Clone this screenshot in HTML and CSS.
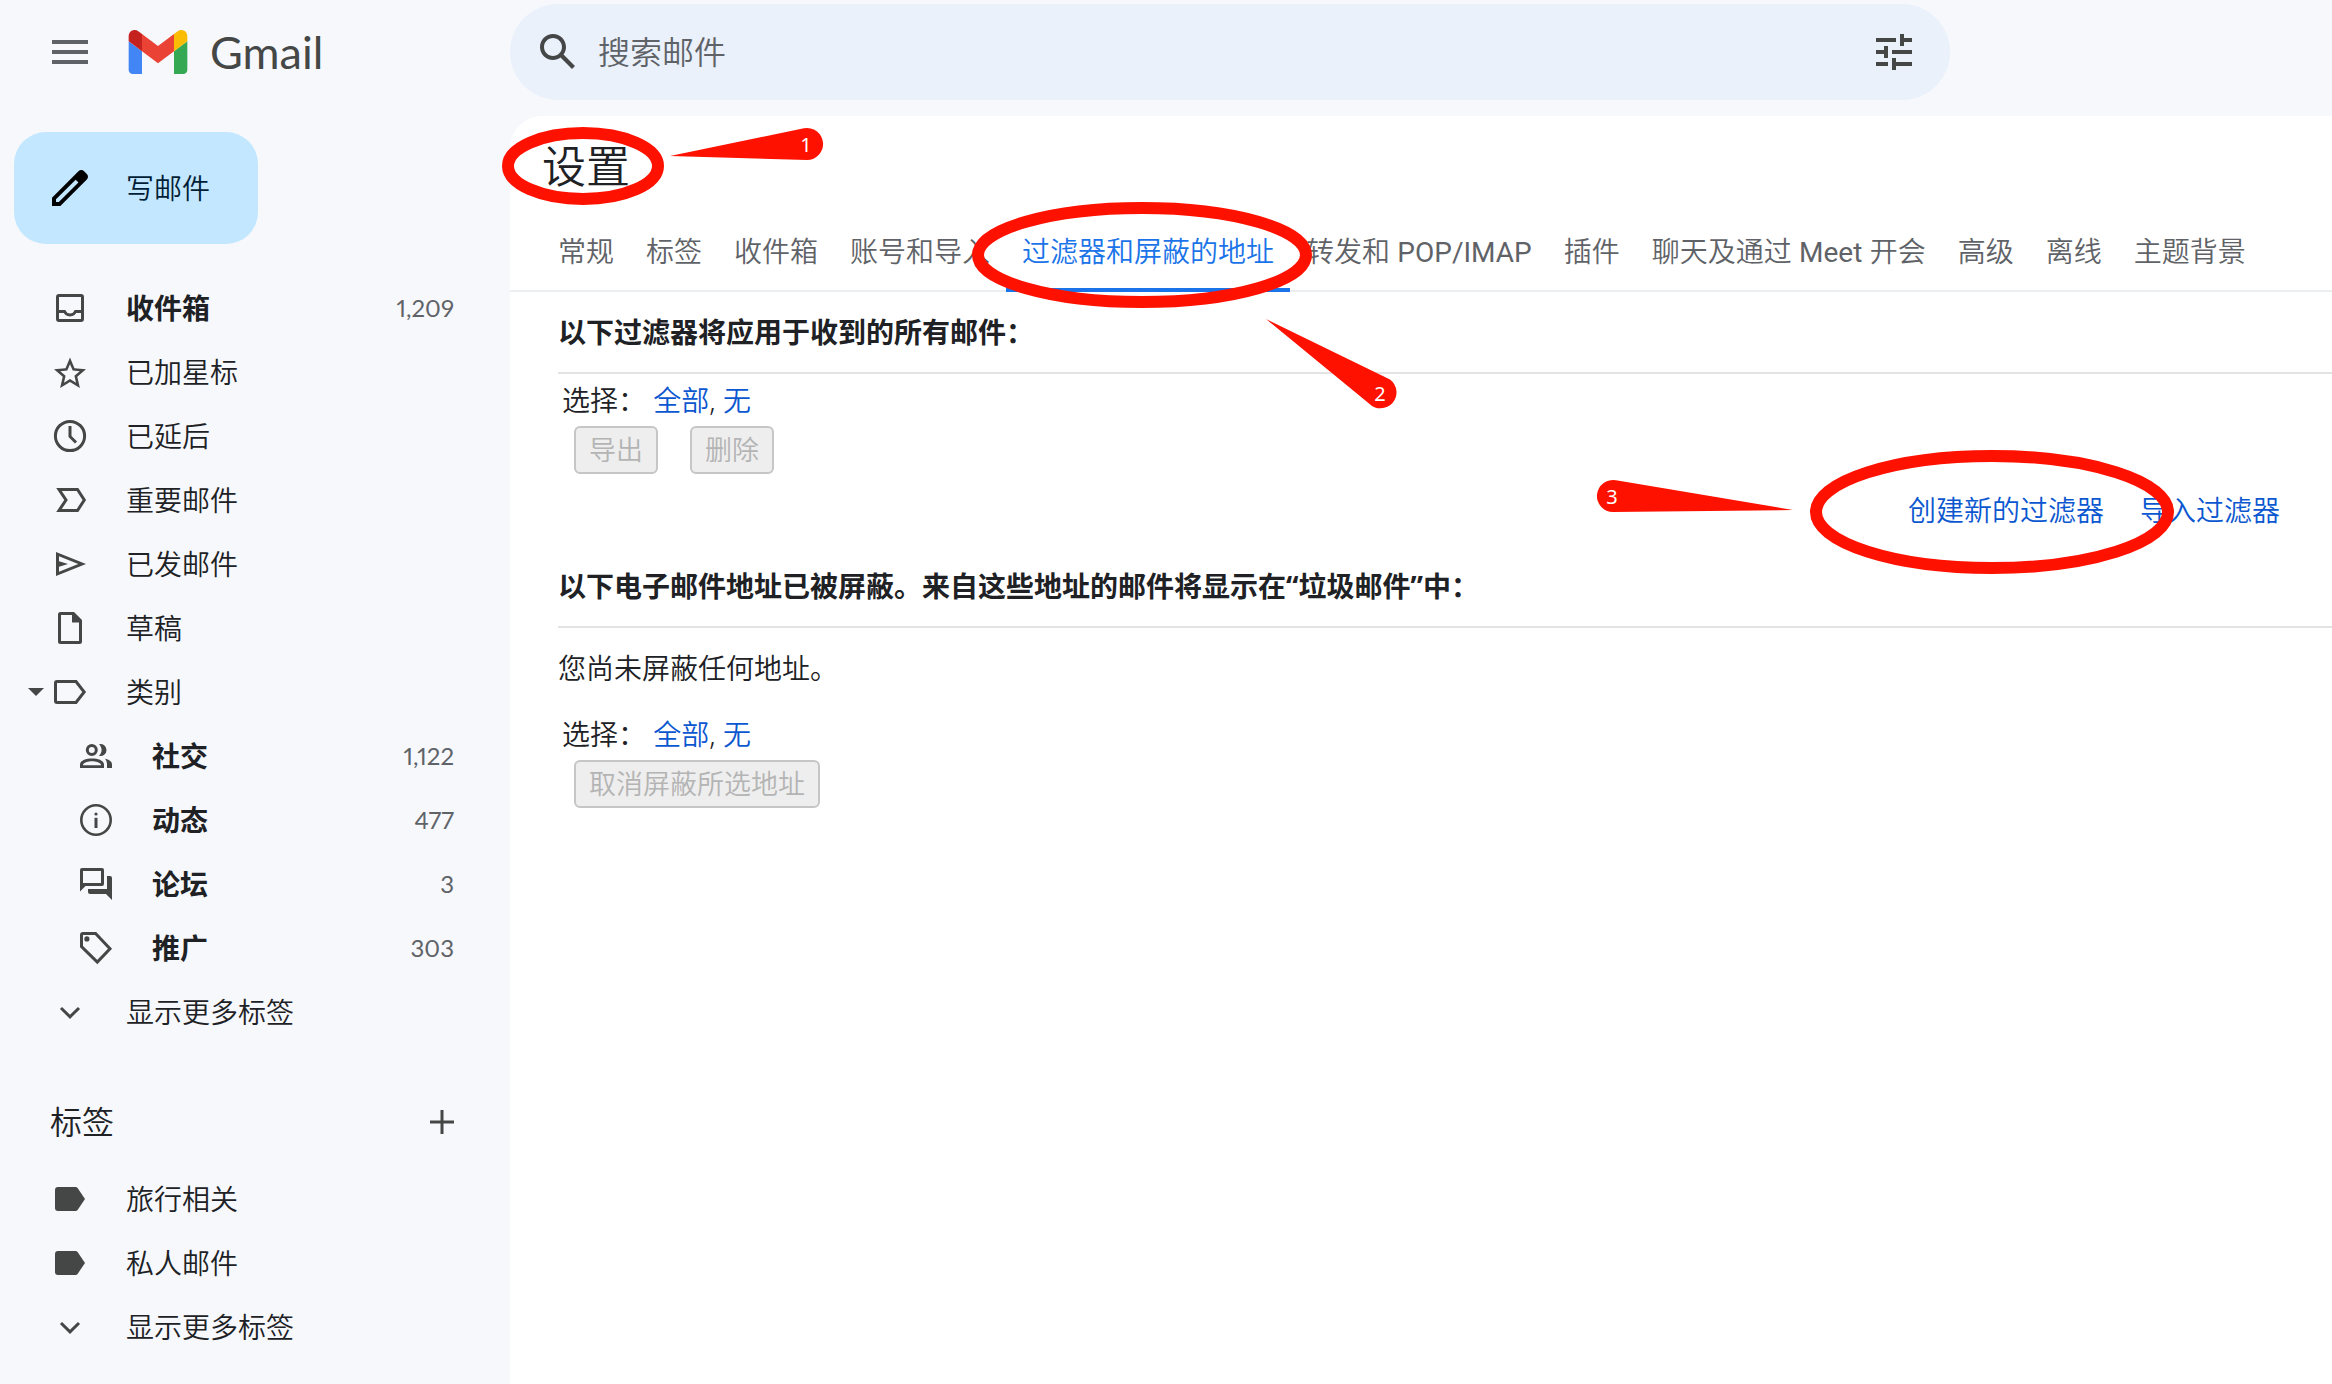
FILE: index.html
```html
<!DOCTYPE html>
<html lang="zh-CN">
<head>
<meta charset="utf-8">
<meta name="viewport" content="width=device-width, initial-scale=1">
<title>设置 - Gmail</title>
<link rel="stylesheet" href="styles.css">
</head>
<body>
<div class="app">
  <header class="topbar">
    <div class="brand">
      <button class="icon-button" type="button" aria-label="主菜单">
        <svg class="icon-lg" viewBox="0 0 24 24"><path d="M3 18h18v-2H3v2zm0-5h18v-2H3v2zm0-7v2h18V6H3z"/></svg>
      </button>
      <a class="brand-link" href="#">
        <svg class="logo" viewBox="52 42 88 66" aria-hidden="true">
          <path fill="#4285f4" d="M58 108h14V74L52 59v43c0 3.32 2.69 6 6 6"/>
          <path fill="#34a853" d="M120 108h14c3.32 0 6-2.69 6-6V59l-20 15"/>
          <path fill="#fbbc04" d="M120 48v26l20-15v-8c0-7.42-8.47-11.65-14.4-7.2"/>
          <path fill="#ea4335" d="M72 74V48l24 18 24-18v26L96 92"/>
          <path fill="#c5221f" d="M52 51v8l20 15V48l-5.6-4.2c-5.94-4.45-14.4-.22-14.4 7.2"/>
        </svg>
        <span class="brand-name">Gmail</span>
      </a>
    </div>
    <form class="search" role="search">
      <button class="icon-button" type="button" aria-label="搜索">
        <svg class="icon-lg" viewBox="0 0 24 24"><path d="M20.49 19l-5.73-5.73C15.53 12.2 16 10.91 16 9.5 16 5.91 13.09 3 9.5 3S3 5.91 3 9.5 5.91 16 9.5 16c1.41 0 2.7-.47 3.77-1.24L19 20.49 20.49 19zM5 9.5C5 7.01 7.01 5 9.5 5S14 7.01 14 9.5 11.99 14 9.5 14 5 11.99 5 9.5z"/></svg>
      </button>
      <input class="search-input" type="text" placeholder="搜索邮件" aria-label="搜索邮件">
      <button class="icon-button" type="button" aria-label="显示搜索选项">
        <svg class="icon-lg" viewBox="0 0 24 24"><path d="M3 17v2h6v-2H3zM3 5v2h10V5H3zm10 16v-2h8v-2h-8v-2h-2v6h2zM7 9v2H3v2h4v2h2V9H7zm14 4v-2H11v2h10zm-6-4h2V7h4V5h-4V3h-2v6z"/></svg>
      </button>
    </form>
  </header>

  <aside class="sidebar">
    <button class="compose" type="button">
      <svg class="icon-lg" viewBox="0 0 24 24"><path d="M20.41 4.94l-1.35-1.35c-.78-.78-2.05-.78-2.83 0L3 16.82V21h4.18L20.41 7.77c.79-.78.79-2.05 0-2.83zM6.41 19.06L5 19v-1.36l9.82-9.82 1.41 1.41z"/></svg>
      写邮件
    </button>
    <nav class="folders">
      <a class="row row-unread" href="#">
        <svg class="icon line" viewBox="0 0 40 40"><rect x="7.5" y="7.5" width="25" height="25" rx="1.5"/><path d="M7.5 23.5h7c1 2.2 3 3.4 5.5 3.4s4.5-1.2 5.500-3.4h7"/></svg>
        <span class="name">收件箱</span><span class="count">1,209</span>
      </a>
      <a class="row" href="#">
        <svg class="icon" viewBox="-0.5 -1.5 25 25"><path d="M22 9.24l-7.19-.62L12 2 9.19 8.63 2 9.24l5.46 4.73L5.82 21 12 17.27 18.18 21l-1.63-7.03L22 9.24zM12 15.4l-3.76 2.27 1-4.28-3.320-2.88 4.38-.38L12 6.1l1.710 4.04 4.38.38-3.32 2.88 1 4.28L12 15.4z"/></svg>
        <span class="name">已加星标</span>
      </a>
      <a class="row" href="#">
        <svg class="icon line" viewBox="0 0 40 40"><circle cx="20" cy="20" r="14.6"/><path d="M20 10v10.500l6 6"/></svg>
        <span class="name">已延后</span>
      </a>
      <a class="row" href="#">
        <svg class="icon line" viewBox="0 0 40 40"><path d="M9 9.500h18.500L34.300 20l-6.800 10.500H9L16 20z"/></svg>
        <span class="name">重要邮件</span>
      </a>
      <a class="row" href="#">
        <svg class="icon" viewBox="0 0 40 40"><path fill-rule="evenodd" d="M6 8l30 12L6 32zM9 12.300v5L18 20l-9 2.700v5L28.300 20z"/></svg>
        <span class="name">已发邮件</span>
      </a>
      <a class="row" href="#">
        <svg class="icon" viewBox="0 0 40 40"><path fill-rule="evenodd" d="M10.500 4H24l8 8v21.500a2.500 2.500 0 0 1-2.500 2.500h-19A2.500 2.500 0 0 1 8 33.500v-27A2.500 2.500 0 0 1 10.500 4zM11 7v26h18V14.500h-7V7z"/></svg>
        <span class="name">草稿</span>
      </a>
      <a class="row row-open" href="#">
        <svg class="caret" viewBox="0 0 16 8"><path d="M0 0h16L8 8z"/></svg>
        <svg class="icon line" viewBox="0 0 40 40"><path d="M7 9.500h19L34.200 20 26 30.500H7A1.500 1.500 0 0 1 5.500 29V11A1.500 1.500 0 0 1 7 9.500z"/></svg>
        <span class="name">类别</span>
      </a>
      <a class="row row-nested row-unread" href="#">
        <svg class="icon" viewBox="0 0 40 40"><circle cx="15.800" cy="14" r="4.500" fill="none" stroke="currentColor" stroke-width="3"/><path fill-rule="evenodd" d="M4 32v-3.500c0-4 6-6 12-6s12 2 12 6V32zM7 29.300h18v-.5c0-1.600-4.500-3.500-9-3.500s-9 1.900-9 3.500z"/><path d="M23 8.200a6 6 0 1 1 0 11.600c1.700-1.600 2.600-3.600 2.600-5.800s-.9-4.200-2.600-5.800zM29 22.800c4 .9 7 2.700 7 5.700V32h-5v-3.500c0-2.400-.8-4.300-2-5.700z"/></svg>
        <span class="name">社交</span><span class="count">1,122</span>
      </a>
      <a class="row row-nested row-unread" href="#">
        <svg class="icon" viewBox="0 0 40 40"><circle cx="20" cy="20" r="14.700" fill="none" stroke="currentColor" stroke-width="2.600"/><circle cx="20" cy="14" r="1.600"/><path d="M18.500 17.800h3V28h-3z"/></svg>
        <span class="name">动态</span><span class="count">477</span>
      </a>
      <a class="row row-nested row-unread" href="#">
        <svg class="icon" viewBox="0 0 40 40"><path fill-rule="evenodd" d="M6 4h20a2 2 0 0 1 2 2v14a2 2 0 0 1-2 2H9.500L4 27.500V6a2 2 0 0 1 2-2zM7 7v12h18V7z"/><path d="M31 12h3a2 2 0 0 1 2 2v22l-6-6H14a2 2 0 0 1-2-2v-3h19z"/></svg>
        <span class="name">论坛</span><span class="count">3</span>
      </a>
      <a class="row row-nested row-unread" href="#">
        <svg class="icon" viewBox="0 0 40 40"><path fill="none" stroke="currentColor" stroke-width="3" d="M7 5.500h12.600L34 20.700 21.300 34 5.500 18.500V7A1.500 1.500 0 0 1 7 5.500z"/><circle cx="10.900" cy="10.900" r="2.600"/></svg>
        <span class="name">推广</span><span class="count">303</span>
      </a>
      <a class="row" href="#">
        <svg class="icon line" viewBox="0 0 40 40"><path d="M11 16l9 8.800 9-8.800"/></svg>
        <span class="name">显示更多标签</span>
      </a>
    </nav>
    <div class="labels-head">
      <h2 class="labels-title">标签</h2>
      <button class="icon-button" type="button" aria-label="新建标签">
        <svg class="plus line" viewBox="0 0 24 24"><path d="M12 0v24M0 12h24"/></svg>
      </button>
    </div>
    <nav class="labels">
      <a class="row" href="#">
        <svg class="icon" viewBox="0 0 40 40"><path d="M8 8h17.500a2.500 2.500 0 0 1 2.100 1.100L35 20l-7.400 10.900a2.500 2.500 0 0 1-2.100 1.100H8a3 3 0 0 1-3-3V11a3 3 0 0 1 3-3z"/></svg>
        <span class="name">旅行相关</span>
      </a>
      <a class="row" href="#">
        <svg class="icon" viewBox="0 0 40 40"><path d="M8 8h17.500a2.500 2.500 0 0 1 2.100 1.100L35 20l-7.400 10.900a2.500 2.500 0 0 1-2.100 1.100H8a3 3 0 0 1-3-3V11a3 3 0 0 1 3-3z"/></svg>
        <span class="name">私人邮件</span>
      </a>
      <a class="row" href="#">
        <svg class="icon line" viewBox="0 0 40 40"><path d="M11 16l9 8.800 9-8.800"/></svg>
        <span class="name">显示更多标签</span>
      </a>
    </nav>
  </aside>

  <main class="panel">
    <h1 class="title">设置
      <svg class="note note-title" width="330" height="90" viewBox="0 0 330 90" aria-hidden="true">
        <ellipse cx="81" cy="45" rx="75" ry="33"/>
        <path d="M168 35L302 7.300a16 16 0 1 1 3 31.700z"/>
        <text x="304" y="31">1</text>
      </svg>
    </h1>
    <nav class="tabs">
      <a class="tab" href="#">常规</a>
      <a class="tab" href="#">标签</a>
      <a class="tab" href="#">收件箱</a>
      <a class="tab" href="#">账号和导入</a>
      <a class="tab tab-active" href="#" aria-current="page">过滤器和屏蔽的地址
        <svg class="note note-tab" width="430" height="210" viewBox="0 0 430 210" aria-hidden="true">
          <ellipse cx="170" cy="53" rx="164" ry="47"/>
          <path d="M294 117L418 177.500a16 16 0 1 1-21 24z"/>
          <text x="408" y="199">2</text>
        </svg>
      </a>
      <a class="tab" href="#">转发和 <span class="latin">POP/IMAP</span></a>
      <a class="tab" href="#">插件</a>
      <a class="tab" href="#">聊天及通过 <span class="latin">Meet</span> 开会</a>
      <a class="tab" href="#">高级</a>
      <a class="tab" href="#">离线</a>
      <a class="tab" href="#">主题背景</a>
    </nav>
    <section class="section">
      <h2 class="section-title">以下过滤器将应用于收到的所有邮件：</h2>
      <p class="select">选择： <a href="#">全部</a>, <a href="#">无</a></p>
      <div class="actions">
        <button class="action" type="button" disabled>导出</button>
        <button class="action" type="button" disabled>删除</button>
      </div>
      <div class="filter-links">
        <a class="filter-create" href="#">创建新的过滤器
          <svg class="note note-link" width="580" height="128" viewBox="0 0 580 128" aria-hidden="true">
            <ellipse cx="396" cy="64" rx="176" ry="56"/>
            <path d="M197 62L17 64a16 16 0 1 1 3-31.700z"/>
            <text x="16" y="56">3</text>
          </svg>
        </a>
        <a href="#">导入过滤器</a>
      </div>
    </section>
    <section class="section section-blocked">
      <h2 class="section-title">以下电子邮件地址已被屏蔽。来自这些地址的邮件将显示在“垃圾邮件”中：</h2>
      <p class="empty">您尚未屏蔽任何地址。</p>
      <p class="select">选择： <a href="#">全部</a>, <a href="#">无</a></p>
      <div class="actions">
        <button class="action" type="button" disabled>取消屏蔽所选地址</button>
      </div>
    </section>
  </main>
</div>
</body>
</html>
```
FILE: styles.css
```css
* { box-sizing: border-box; }

body {
  margin: 0;
  background: #f6f8fc;
  color: #202124;
  font-family: "Noto Sans", "Noto Sans CJK SC", sans-serif;
  font-size: 28px;
  font-weight: 350;
  line-height: 40px;
}

a { color: #0b57d0; text-decoration: none; }
h1, h2, p { margin: 0; }
svg { display: block; flex: none; fill: currentColor; }
button, input { font: inherit; }

.app {
  display: grid;
  grid-template-columns: 510px minmax(0, 1fr);
  grid-template-rows: auto 1fr;
  min-height: 100vh;
  overflow: hidden;
}

.icon-button {
  padding: 0;
  border: 0;
  background: none;
  color: #444746;
}
.icon-lg { width: 48px; height: 48px; }
.line {
  fill: none;
  stroke: currentColor;
  stroke-width: 3;
}

/* Top bar */
.topbar {
  grid-column: 1 / -1;
  display: grid;
  grid-template-columns: subgrid;
  align-items: center;
  padding: 4px 0 16px;
}
.brand {
  display: flex;
  align-items: center;
  gap: 34px;
  padding-left: 46px;
}
.brand .icon-button { color: #5f6368; }
.brand-link {
  display: flex;
  align-items: center;
  gap: 22px;
}
.logo { width: 60px; height: 44px; }
.brand-name {
  color: #444746;
  font-family: Lato, sans-serif;
  font-size: 45px;
  font-weight: 400;
}
.search {
  display: flex;
  align-items: center;
  gap: 16px;
  width: 100%;
  max-width: 1440px;
  height: 96px;
  padding: 0 32px 0 24px;
  border-radius: 48px;
  background: #eaf1fb;
}
.search-input {
  flex: 1;
  min-width: 0;
  padding: 0;
  border: 0;
  outline: 0;
  background: none;
  color: #202124;
  font-size: 32px;
}
.search-input::placeholder { color: #5f6368; opacity: 1; }

/* Sidebar */
.sidebar { padding-top: 16px; }
.compose {
  display: flex;
  align-items: center;
  gap: 32px;
  height: 112px;
  margin: 0 0 32px 14px;
  padding: 0 48px 0 32px;
  border: 0;
  border-radius: 32px;
  background: #c2e7ff;
  color: #001d35;
}
.compose svg { color: #000; }
.row {
  display: flex;
  align-items: center;
  height: 64px;
  padding: 0 56px 0 50px;
  color: #202124;
}
.row-nested { padding-left: 76px; }
.row-open { padding-left: 28px; }
.row-unread .name { font-weight: 700; }
.icon {
  width: 40px;
  height: 40px;
  margin-right: 36px;
  color: #444746;
}
.caret {
  width: 16px;
  height: 8px;
  margin-right: 6px;
  color: #444746;
}
.name { flex: 1; }
.count {
  color: #5f6368;
  font-family: Lato, sans-serif;
  font-size: 24px;
  font-weight: 400;
  font-variant-numeric: proportional-nums;
}
.labels-head {
  display: flex;
  align-items: center;
  justify-content: space-between;
  height: 64px;
  margin: 46px 0 13px;
  padding: 0 56px 0 50px;
}
.labels-title { font-size: 32px; font-weight: 350; }
.plus { width: 24px; height: 24px; }

/* Settings panel */
.panel {
  display: flow-root;
  border-radius: 32px 0 0 0;
  background: #fff;
}
.title {
  position: relative;
  width: fit-content;
  margin: 22px 0 18px 32px;
  font-size: 44px;
  font-weight: 350;
  line-height: 56px;
}
.tabs {
  display: flex;
  height: 80px;
  border-bottom: 2px solid #eceff1;
  white-space: nowrap;
  padding-left: 32px;
}
.tab {
  position: relative;
  height: 80px;
  padding: 0 16px;
  color: #5f6368;
  line-height: 78px;
}
.tab-active {
  z-index: 1;
  border-bottom: 4px solid #1a73e8;
  color: #1a73e8;
}
.latin {
  font-family: Roboto, sans-serif;
  font-weight: 450;
}

.section { padding: 20px 0 0 48px; }
.section-blocked { padding-top: 36px; }
.section-title {
  padding-bottom: 20px;
  border-bottom: 2px solid #e3e3e3;
  font-size: 28px;
  font-weight: 700;
}
.select { padding: 6px 0 6px 4px; }
.empty { padding: 20px 0; }
.actions {
  display: flex;
  gap: 32px;
  padding-left: 16px;
}
.action {
  height: 48px;
  padding: 0 13px;
  border: 2px solid #c6c6c6;
  border-radius: 6px;
  background: #eee;
  color: #b4b4b4;
  font-size: 27px;
}
.filter-links {
  display: flex;
  justify-content: flex-end;
  gap: 36px;
  margin-top: 16px;
  padding-right: 52px;
}
.filter-create { position: relative; }

/* Red call-outs laid over the page */
.note {
  position: absolute;
  z-index: 2;
  overflow: visible;
  fill: #ff1100;
  pointer-events: none;
}
.note ellipse {
  fill: none;
  stroke: #ff1100;
  stroke-width: 12;
}
.note text {
  fill: #fff;
  font-size: 20px;
  font-weight: 400;
  text-anchor: middle;
}
.note-title { top: -17px; left: -40px; }
.note-tab { top: -10px; left: -34px; }
.note-link { top: -42px; left: -312px; }
```
